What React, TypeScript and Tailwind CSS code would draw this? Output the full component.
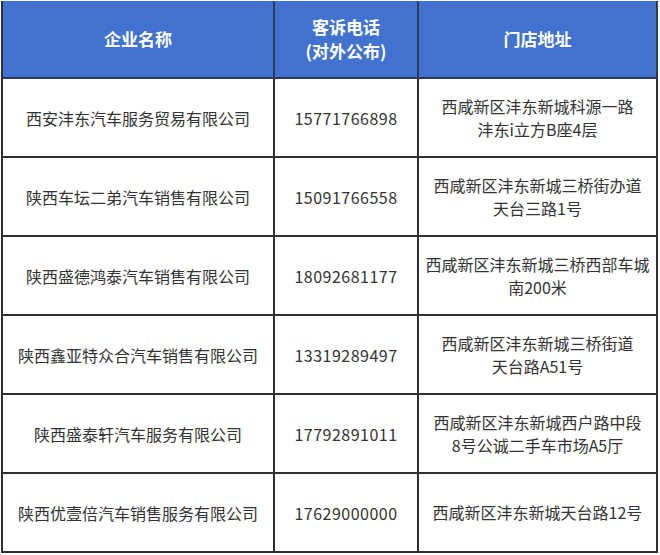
const rows = [
  { name: '西安沣东汽车服务贸易有限公司', phone: '15771766898', addr: ['西咸新区沣东新城科源一路', '沣东i立方B座4层'] },
  { name: '陕西车坛二弟汽车销售有限公司', phone: '15091766558', addr: ['西咸新区沣东新城三桥街办道', '天台三路1号'] },
  { name: '陕西盛德鸿泰汽车销售有限公司', phone: '18092681177', addr: ['西咸新区沣东新城三桥西部车城', '南200米'] },
  { name: '陕西鑫亚特众合汽车销售有限公司', phone: '13319289497', addr: ['西咸新区沣东新城三桥街道', '天台路A51号'] },
  { name: '陕西盛泰轩汽车服务有限公司', phone: '17792891011', addr: ['西咸新区沣东新城西户路中段', '8号公诚二手车市场A5厅'] },
  { name: '陕西优壹倍汽车销售服务有限公司', phone: '17629000000', addr: ['西咸新区沣东新城天台路12号'] },
]

export default function App() {
  return (
    <div
      className="h-[555px] w-[660px] bg-white pl-[1px] pr-[2px] pt-[1px]"
      style={{ fontFamily: '"Noto Sans CJK SC", "Noto Sans", sans-serif' }}
    >
      <div className="grid grid-cols-[272px_144px_1fr] border-l-2 border-[#2f2f33] text-[16px] text-[#333]">
        {/* Header */}
        <div className="flex h-[78px] items-center justify-center border-b-2 border-r-2 border-[#2f3a55] bg-[#4272cf] text-[17px] font-bold text-white">
          企业名称
        </div>
        <div className="flex h-[78px] flex-col items-center justify-center border-b-2 border-r-2 border-[#2f3a55] bg-[#4272cf] text-[17px] font-bold leading-[24px] text-white">
          <span>客诉电话</span>
          <span>(对外公布)</span>
        </div>
        <div className="flex h-[78px] items-center justify-center border-b-2 border-r-2 border-[#2f3a55] bg-[#4272cf] text-[17px] font-bold text-white">
          门店地址
        </div>

        {rows.map((r) => (
          <div key={r.phone} className="contents">
            <div className="flex h-[79px] items-center justify-center border-b-2 border-r-2 border-[#2f2f33]">
              {r.name}
            </div>
            <div className="flex h-[79px] items-center justify-center border-b-2 border-r-2 border-[#2f2f33] tracking-[0.5px]">
              {r.phone}
            </div>
            <div className="flex h-[79px] flex-col items-center justify-center border-b-2 border-r-2 border-[#2f2f33] leading-[23px]">
              {r.addr.map((a) => (
                <span key={a}>{a}</span>
              ))}
            </div>
          </div>
        ))}
      </div>
    </div>
  )
}
